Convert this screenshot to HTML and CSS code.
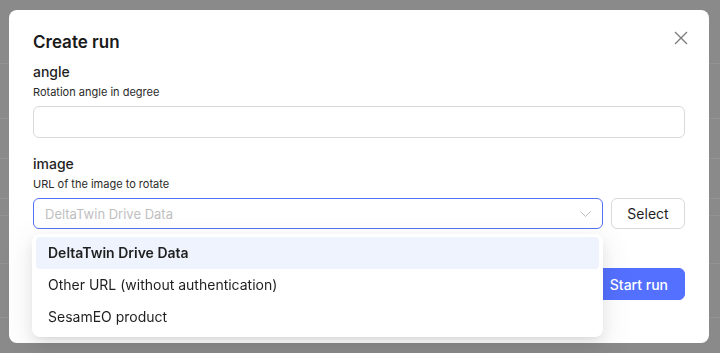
FILE: index.html
```html
<!DOCTYPE html>
<html lang="en">
<head>
  <meta charset="UTF-8" />
  <meta name="viewport" content="width=device-width, initial-scale=1.0" />
  <title>Create run</title>
  <link rel="stylesheet" href="styles.css">
</head>
<body>

<div class="page">
  <div class="page-row r1"></div>
  <div class="page-row r2"></div>
  <div class="page-row r3"></div>
  <div class="page-row r4"></div>
  <div class="page-row r5"></div>
  <div class="page-row r6"></div>
  <div class="page-row r7"></div>
</div>

<div class="overlay">
  <div class="modal">
    <h2 class="modal-title">Create run</h2>
    <button class="close" aria-label="Close">
      <svg width="14" height="14" viewBox="0 0 14 14">
        <path d="M1 1 L13 13 M13 1 L1 13" stroke="#7a7a7a" stroke-width="1.3" fill="none" />
      </svg>
    </button>

    <div class="field">
      <div class="label">angle</div>
      <div class="hint">Rotation angle in degree</div>
      <input class="input" type="text" />
    </div>

    <div class="field">
      <div class="label">image</div>
      <div class="hint">URL of the image to rotate</div>
      <div class="select-row">
        <div class="select">
          <span class="placeholder">DeltaTwin Drive Data</span>
          <svg class="chevron" width="11" height="6" viewBox="0 0 11 6">
            <path d="M0.5 0.5 L5.5 5.5 L10.5 0.5" stroke="#bdbdbd" stroke-width="1" fill="none" />
          </svg>
        </div>
        <button class="btn btn-select">Select</button>
      </div>
    </div>

    <div class="footer">
      <button class="btn btn-primary">Start run</button>
    </div>

    <ul class="dropdown">
      <li class="option active">DeltaTwin Drive Data</li>
      <li class="option">Other URL (without authentication)</li>
      <li class="option">SesamEO product</li>
    </ul>
  </div>
</div>

</body>
</html>
```

FILE: styles.css
```css
body {
  margin: 0;
  font-family: 'Inter', 'Noto Sans', sans-serif;
  background: #8a8a8a;
  color: #1f1f1f;
  height: 353px;
  overflow: hidden;
}

.page {
  height: 353px;
}

.page-row {
  border-bottom: 1px solid #939393;
}

.r1 { height: 63px; }
.r2 { height: 54px; }
.r3 { height: 39px; }
.r4 { height: 39px; }
.r5 { height: 16px; }
.r6 { height: 47px; }
.r7 { height: 53px; }

.overlay {
  position: fixed;
  inset: 0;
  padding: 10px 0 0 9px;
}

.modal {
  position: relative;
  box-sizing: border-box;
  width: 700px;
  height: 333px;
  padding: 20px 24px 0;
  background: #ffffff;
  border-radius: 8px;
}

.modal-title {
  margin: 0 0 8px;
  font-size: 17px;
  line-height: 24px;
  font-weight: 600;
  color: #1a1a1a;
}

.close {
  position: absolute;
  top: 21px;
  right: 21px;
  padding: 0;
  border: none;
  background: none;
  width: 14px;
  height: 14px;
  display: flex;
}

.field + .field {
  margin-top: 16px;
}

.label {
  font-size: 14px;
  line-height: 20px;
  font-weight: 500;
}

.hint {
  margin-top: 2px;
  margin-bottom: 6px;
  font-size: 11px;
  line-height: 16px;
  color: #2a2a2a;
}

.input {
  display: block;
  box-sizing: border-box;
  width: 100%;
  height: 32px;
  margin: 0;
  border: 1px solid #d9d9d9;
  border-radius: 6px;
  background: #fff;
}

.select-row {
  display: flex;
  gap: 8px;
}

.select {
  flex: 1;
  box-sizing: border-box;
  height: 31px;
  display: flex;
  align-items: center;
  justify-content: space-between;
  padding: 0 11px 0 11px;
  border: 1px solid #5472f2;
  border-radius: 6px;
}

.placeholder {
  font-size: 13px;
  color: #bfbfbf;
}

.btn {
  box-sizing: border-box;
  height: 31px;
  padding: 0 14px;
  border: 1px solid #d9d9d9;
  border-radius: 6px;
  background: #fff;
  font-family: inherit;
  font-size: 14px;
  color: #1f1f1f;
}

.btn-select {
  width: 74px;
  padding: 0;
}

.footer {
  display: flex;
  justify-content: flex-end;
  margin-top: 39px;
}

.btn-primary {
  height: 32px;
  padding: 0 16px;
  border-color: #5470ff;
  background: #5470ff;
  color: #fff;
  font-weight: 500;
}

.dropdown {
  position: absolute;
  left: 23px;
  top: 224px;
  width: 571px;
  box-sizing: border-box;
  margin: 0;
  padding: 3px 4px 4px;
  list-style: none;
  background: #fff;
  border-radius: 8px;
  box-shadow: 0 6px 16px rgba(0, 0, 0, 0.08), 0 3px 6px -4px rgba(0, 0, 0, 0.12), 0 9px 28px 8px rgba(0, 0, 0, 0.05);
}

.option {
  height: 32px;
  line-height: 32px;
  padding: 0 12px;
  font-size: 14px;
  color: #1f1f1f;
  border-radius: 4px;
}

.option.active {
  background: #eef3fe;
  font-weight: 600;
}
```
